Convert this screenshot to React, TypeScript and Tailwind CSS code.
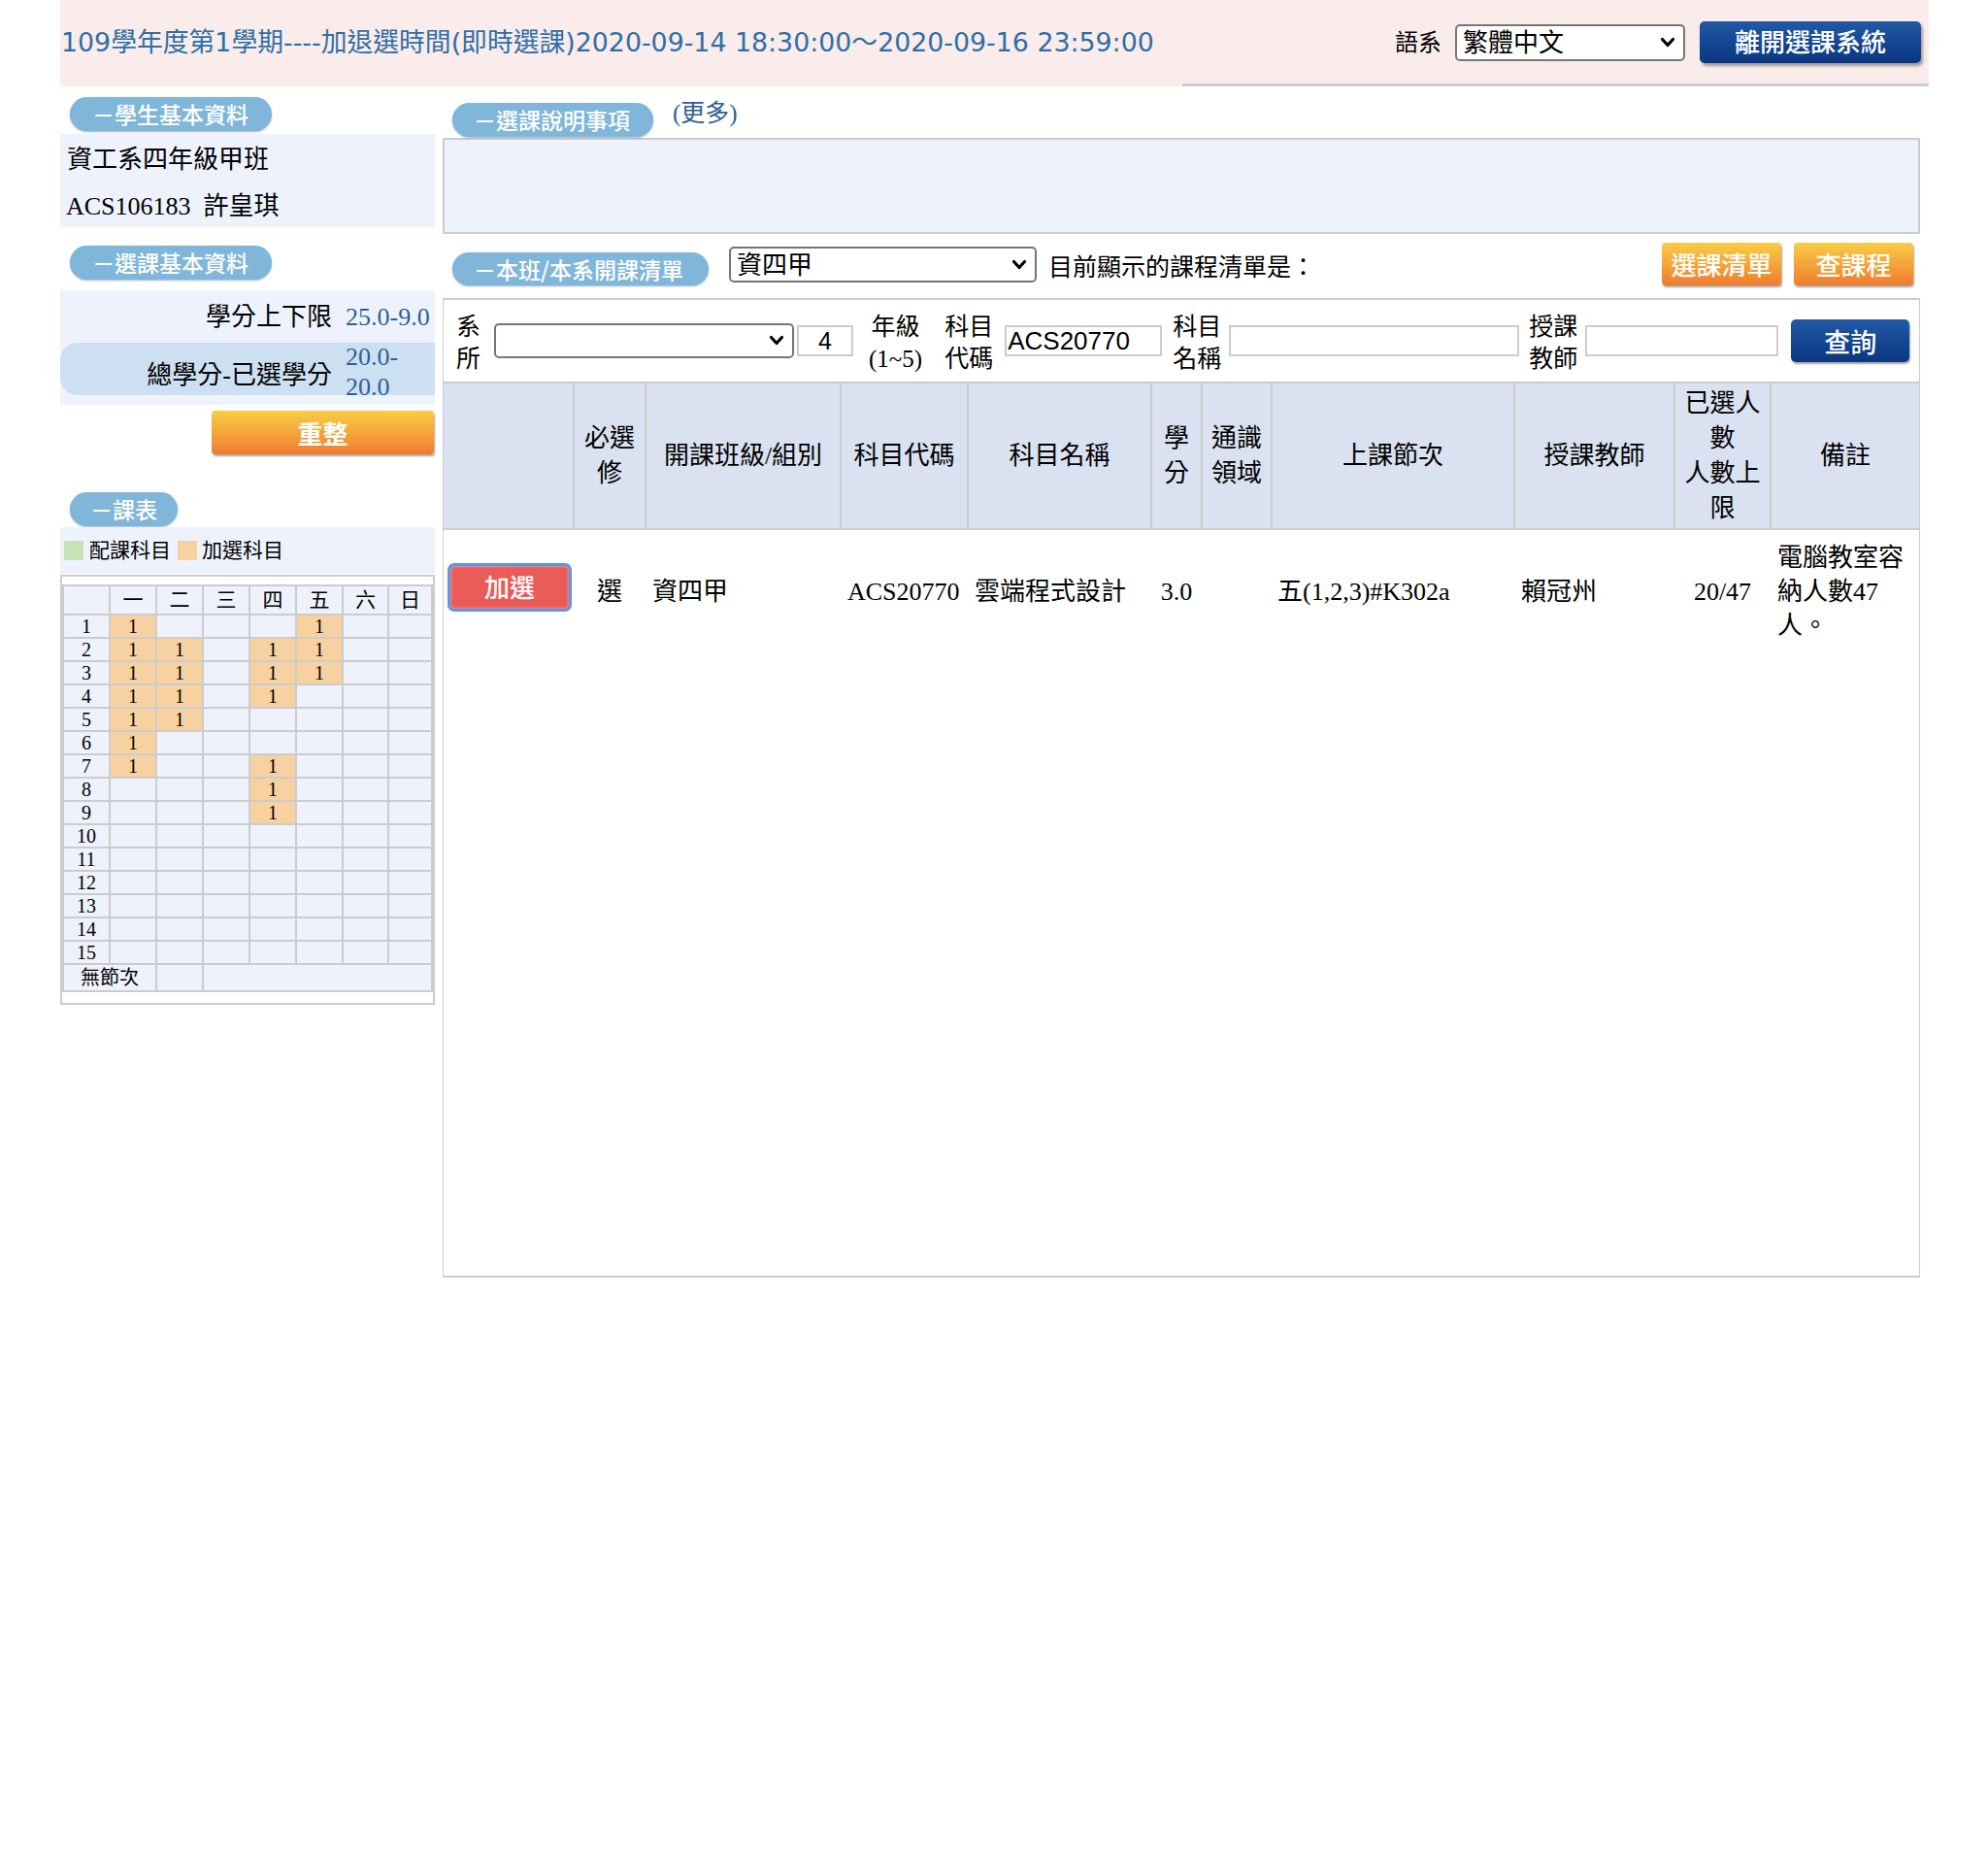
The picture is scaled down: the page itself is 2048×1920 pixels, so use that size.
import React from "react";

const Chevron = () => (
  <svg width="16" height="12" viewBox="0 0 16 12" className="shrink-0">
    <path d="M2.5 2.5 L8 8.5 L13.5 2.5" fill="none" stroke="#000" strokeWidth="3.2" strokeLinecap="round" strokeLinejoin="round" />
  </svg>
);

const sched: Record<number, number[]> = {
  1: [0, 4],
  2: [0, 1, 3, 4],
  3: [0, 1, 3, 4],
  4: [0, 1, 3],
  5: [0, 1],
  6: [0],
  7: [0, 3],
  8: [3],
  9: [3],
};

const days = ["一", "二", "三", "四", "五", "六", "日"];

function Schedule() {
  const cells: React.ReactNode[] = [];
  cells.push(<div key="h0" className="h-[28px] bg-[#eef2fc]" />);
  days.forEach((d) =>
    cells.push(
      <div key={"h" + d} className="flex h-[28px] items-center justify-center bg-[#eef2fc] text-[21px] leading-none">
        {d}
      </div>
    )
  );
  for (let r = 1; r <= 15; r++) {
    cells.push(
      <div key={"r" + r} className="flex h-[22px] items-center justify-center bg-[#eef2fc] text-[20px] leading-none">
        {r}
      </div>
    );
    for (let c = 0; c < 7; c++) {
      const on = (sched[r] || []).includes(c);
      cells.push(
        <div
          key={r + "-" + c}
          className={
            on
              ? "flex h-[22px] items-center justify-center bg-[#f8d1a1] text-[20px] leading-none"
              : "flex h-[22px] items-center justify-center bg-[#eef2fc] text-[20px] leading-none"
          }
        >
          {on ? "1" : ""}
        </div>
      );
    }
  }
  cells.push(
    <div key="n0" className="col-span-2 flex h-[26px] items-center justify-center bg-[#eef2fc] text-[20px] leading-none">
      無節次
    </div>
  );
  cells.push(<div key="n1" className="h-[26px] bg-[#eef2fc]" />);
  cells.push(<div key="n2" className="col-span-5 h-[26px] bg-[#eef2fc]" />);
  return (
    <div className="mt-[1px] border-2 border-[#cccccc] bg-white pb-[11px] pt-[8px]">
      <div className="grid grid-cols-[46px_46px_46px_46px_46px_46px_45px_43px] gap-[2px] bg-[#cccccc] p-[2px]">
        {cells}
      </div>
    </div>
  );
}

export default function App() {
  return (
    <div className="min-h-[1920px] w-[2048px] bg-white font-['Liberation_Serif','Noto_Sans_CJK_TC',serif] text-black">
      <div className="ml-[62px] w-[1925px]">
        {/* header */}
        <div className="flex h-[89px] bg-[#f9ecea]">
          <div className="flex flex-1 items-center whitespace-nowrap pb-[1px] pl-[1px] font-['DejaVu_Sans','Noto_Sans_CJK_TC',sans-serif] text-[26.8px] text-[#2f6ea5]">
            109學年度第1學期----加退選時間(即時選課)2020-09-14 18:30:00～2020-09-16 23:59:00
          </div>
          <div className="flex w-[769px] shrink-0 items-center justify-end border-b-[3px] border-[#cdcdcd] pr-[8px] pt-[1px] font-['Liberation_Sans','Noto_Sans_CJK_TC',sans-serif]">
            <div className="text-[24px] leading-none">語系</div>
            <div className="ml-[14px] flex h-[38px] w-[237px] items-center justify-between rounded-[5px] border-2 border-[#767676] bg-white pl-[6px] pr-[8px] text-[26px] leading-none">
              <span>繁體中文</span>
              <Chevron />
            </div>
            <div className="ml-[15px] flex h-[43px] w-[228px] items-center justify-center rounded-[5px] bg-gradient-to-b from-[#2159a6] to-[#0b3680] text-[26px] font-medium leading-none text-white shadow-[2px_3px_3px_rgba(0,0,0,0.35)]">
              離開選課系統
            </div>
          </div>
        </div>

        <div className="flex">
          {/* left column */}
          <div className="w-[386px] shrink-0 pt-[11px]">
            <div className="ml-[10px] flex h-[35px] w-[208px] items-center rounded-full bg-[#7fb6d9] pl-[23px] font-['Noto_Sans_CJK_TC',sans-serif] text-[23px] font-medium leading-none text-white shadow-[0_1px_2px_rgba(40,90,130,0.45)]">
              －學生基本資料
            </div>
            <div className="mt-[3px] bg-[#eef2fc] text-[26px]">
              <div className="flex h-[48px] items-center px-[7px] pt-[4px]">資工系四年級甲班</div>
              <div className="flex h-[48px] items-center whitespace-pre px-[6px] pt-[4px]">ACS106183  許皇琪</div>
            </div>

            <div className="ml-[10px] mt-[19px] flex h-[35px] w-[208px] items-center rounded-full bg-[#7fb6d9] pl-[23px] font-['Noto_Sans_CJK_TC',sans-serif] text-[23px] font-medium leading-none text-white shadow-[0_1px_2px_rgba(40,90,130,0.45)]">
              －選課基本資料
            </div>
            <div className="mt-[11px] bg-[#eef2fc] pb-[10px] text-[26px]">
              <div className="flex h-[54px] items-center">
                <div className="w-[280px] text-right">學分上下限</div>
                <div className="ml-[14px] w-[92px] text-[#2d5f99]">25.0-9.0</div>
              </div>
              <div className="flex h-[54px] items-center rounded-l-[18px] bg-[#cde0f1]">
                <div className="mt-[12px] w-[280px] text-right">總學分-已選學分</div>
                <div className="ml-[14px] mt-[6px] w-[92px] leading-[31px] text-[#2d5f99]">20.0-20.0</div>
              </div>
            </div>
            <div className="mt-[6px] flex justify-end pr-[1px]">
              <div className="flex h-[45px] w-[229px] items-center justify-center rounded-[4px] bg-gradient-to-b from-[#f8cd45] to-[#ee7b2f] font-['Noto_Sans_CJK_TC',sans-serif] text-[26px] font-bold leading-none text-white shadow-[1px_2px_2px_rgba(0,0,0,0.35)]">
                重整
              </div>
            </div>

            <div className="ml-[10px] mt-[39px] flex h-[35px] w-[111px] items-center rounded-full bg-[#7fb6d9] pl-[21px] font-['Noto_Sans_CJK_TC',sans-serif] text-[23px] font-medium leading-none text-white shadow-[0_1px_2px_rgba(40,90,130,0.45)]">
              －課表
            </div>
            <div className="mt-[1px] flex h-[48px] items-center bg-[#eef2fc] pl-[4px] text-[21px] leading-none">
              <div className="h-[20px] w-[20px] bg-[#c6e3b7]" />
              <span className="ml-[6px]">配課科目</span>
              <div className="ml-[7px] h-[20px] w-[20px] bg-[#f8d1a1]" />
              <span className="ml-[5px]">加選科目</span>
            </div>
            <Schedule />
          </div>

          {/* right column */}
          <div className="ml-[8px] w-[1522px] shrink-0 pt-[17px]">
            <div className="flex items-start">
              <div className="ml-[10px] flex h-[35px] w-[207px] items-center rounded-full bg-[#7fb6d9] pl-[22px] font-['Noto_Sans_CJK_TC',sans-serif] text-[23px] font-medium leading-none text-white shadow-[0_1px_2px_rgba(40,90,130,0.45)]">
                －選課說明事項
              </div>
              <div className="-mt-[4px] ml-[20px] text-[25px] leading-[30px] text-[#2d5f99]">(更多)</div>
            </div>
            <div className="mt-[1px] h-[99px] border-2 border-[#cccccc] bg-[#eef2fc]" />

            <div className="mt-[9px] flex h-[44px] items-start">
              <div className="ml-[10px] mt-[10px] flex h-[34px] w-[264px] items-center rounded-full bg-[#7fb6d9] pl-[22px] font-['Noto_Sans_CJK_TC',sans-serif] text-[23px] font-medium leading-none text-white shadow-[0_1px_2px_rgba(40,90,130,0.45)]">
                －本班/本系開課清單
              </div>
              <div className="ml-[21px] mt-[4px] flex h-[37px] w-[317px] items-center justify-between rounded-[5px] border-2 border-[#767676] bg-white pl-[6px] pr-[8px] font-['Liberation_Sans','Noto_Sans_CJK_TC',sans-serif] text-[26px] leading-none">
                <span>資四甲</span>
                <Chevron />
              </div>
              <div className="ml-[12px] mt-[10px] text-[25px] leading-[32px]">目前顯示的課程清單是：</div>
              <div className="ml-auto flex h-[44px] w-[123px] items-center justify-center rounded-[4px] bg-gradient-to-b from-[#f8cd45] to-[#ee7b2f] font-['Noto_Sans_CJK_TC',sans-serif] text-[26px] font-medium leading-none text-white shadow-[1px_2px_2px_rgba(0,0,0,0.35)]">
                選課清單
              </div>
              <div className="ml-[13px] mr-[7px] flex h-[44px] w-[123px] items-center justify-center rounded-[4px] bg-gradient-to-b from-[#f8cd45] to-[#ee7b2f] font-['Noto_Sans_CJK_TC',sans-serif] text-[26px] font-medium leading-none text-white shadow-[1px_2px_2px_rgba(0,0,0,0.35)]">
                查課程
              </div>
            </div>

            <div className="mt-[13px] h-[1009px] border-x border-y-2 border-[#cccccc]">
              {/* filter row */}
              <div className="flex h-[84px] items-center pl-[13px] text-[25px] leading-[33px]">
                <div className="w-[25px] pt-[4px]">系<br />所</div>
                <div className="ml-[14px] flex h-[36px] w-[309px] items-center justify-end rounded-[5px] border-2 border-[#767676] bg-white pr-[8px]">
                  <Chevron />
                </div>
                <div className="ml-[3px] flex h-[32px] w-[58px] items-center justify-center border-2 border-[#cccccc] bg-white font-['Liberation_Sans',sans-serif] text-[25px] leading-none">
                  4
                </div>
                <div className="ml-[16px] pt-[4px] text-center">年級<br />(1~5)</div>
                <div className="ml-[23px] pt-[4px]">科目<br />代碼</div>
                <div className="ml-[12px] flex h-[32px] w-[162px] items-center border-2 border-[#cccccc] bg-white pl-[1px] font-['Liberation_Sans',sans-serif] text-[26px] leading-none">
                  ACS20770
                </div>
                <div className="ml-[11px] pt-[4px]">科目<br />名稱</div>
                <div className="ml-[8px] h-[32px] w-[299px] border-2 border-[#cccccc] bg-white" />
                <div className="ml-[10px] pt-[4px]">授課<br />教師</div>
                <div className="ml-[8px] h-[32px] w-[199px] border-2 border-[#cccccc] bg-white" />
                <div className="ml-[13px] flex h-[44px] w-[122px] items-center justify-center rounded-[5px] bg-gradient-to-b from-[#2159a6] to-[#0b3680] font-['Noto_Sans_CJK_TC',sans-serif] text-[27px] font-medium leading-none text-white shadow-[1px_2px_2px_rgba(0,0,0,0.35)]">
                  查詢
                </div>
              </div>

              {/* course table */}
              <table className="w-full table-fixed border-collapse">
                <colgroup>
                  <col className="w-[134px]" />
                  <col className="w-[74px]" />
                  <col className="w-[201px]" />
                  <col className="w-[131px]" />
                  <col className="w-[189px]" />
                  <col className="w-[52px]" />
                  <col className="w-[72px]" />
                  <col className="w-[250px]" />
                  <col className="w-[165px]" />
                  <col className="w-[99px]" />
                  <col />
                </colgroup>
                <thead>
                  <tr className="h-[151px] bg-[#dae1f0] text-[26px] leading-[36px]">
                    <th className="border-y-2 border-r-2 border-[#cccccc] font-normal"></th>
                    <th className="border-y-2 border-r-2 border-[#cccccc] px-[2px] font-normal">必選修</th>
                    <th className="border-y-2 border-r-2 border-[#cccccc] px-[2px] font-normal">開課班級/組別</th>
                    <th className="border-y-2 border-r-2 border-[#cccccc] px-[2px] font-normal">科目代碼</th>
                    <th className="border-y-2 border-r-2 border-[#cccccc] px-[2px] font-normal">科目名稱</th>
                    <th className="border-y-2 border-r-2 border-[#cccccc] px-[2px] font-normal">學分</th>
                    <th className="border-y-2 border-r-2 border-[#cccccc] px-[2px] font-normal">通識領域</th>
                    <th className="border-y-2 border-r-2 border-[#cccccc] px-[2px] font-normal">上課節次</th>
                    <th className="border-y-2 border-r-2 border-[#cccccc] px-[2px] font-normal">授課教師</th>
                    <th className="border-y-2 border-r-2 border-[#cccccc] px-[2px] font-normal">
                      已選人數
                      <br />
                      人數上限
                    </th>
                    <th className="border-y-2 border-[#cccccc] px-[2px] font-normal">備註</th>
                  </tr>
                </thead>
                <tbody>
                  <tr className="text-[26px] leading-[35px]">
                    <td className="py-[11px] align-middle">
                      <div className="mb-[10px] ml-[4px] flex h-[50px] w-[128px] items-center justify-center rounded-[7px] border-[3px] border-[#5d94ea] bg-[#ea5c58] pb-[2px] font-['Noto_Sans_CJK_TC',sans-serif] text-[26px] font-medium leading-none text-white shadow-[inset_0_0_3px_rgba(255,255,255,0.6)]">
                        加選
                      </div>
                    </td>
                    <td className="text-center align-middle">選</td>
                    <td className="pl-[7px] align-middle">資四甲</td>
                    <td className="pl-[7px] align-middle">ACS20770</td>
                    <td className="pl-[7px] align-middle">雲端程式設計</td>
                    <td className="text-center align-middle">3.0</td>
                    <td className="align-middle"></td>
                    <td className="pl-[6px] align-middle">五(1,2,3)#K302a</td>
                    <td className="pl-[7px] align-middle">賴冠州</td>
                    <td className="text-center align-middle">20/47</td>
                    <td className="py-[11px] pl-[7px] pr-[4px] align-middle">電腦教室容納人數47人。</td>
                  </tr>
                </tbody>
              </table>
            </div>
          </div>
        </div>
      </div>
    </div>
  );
}
